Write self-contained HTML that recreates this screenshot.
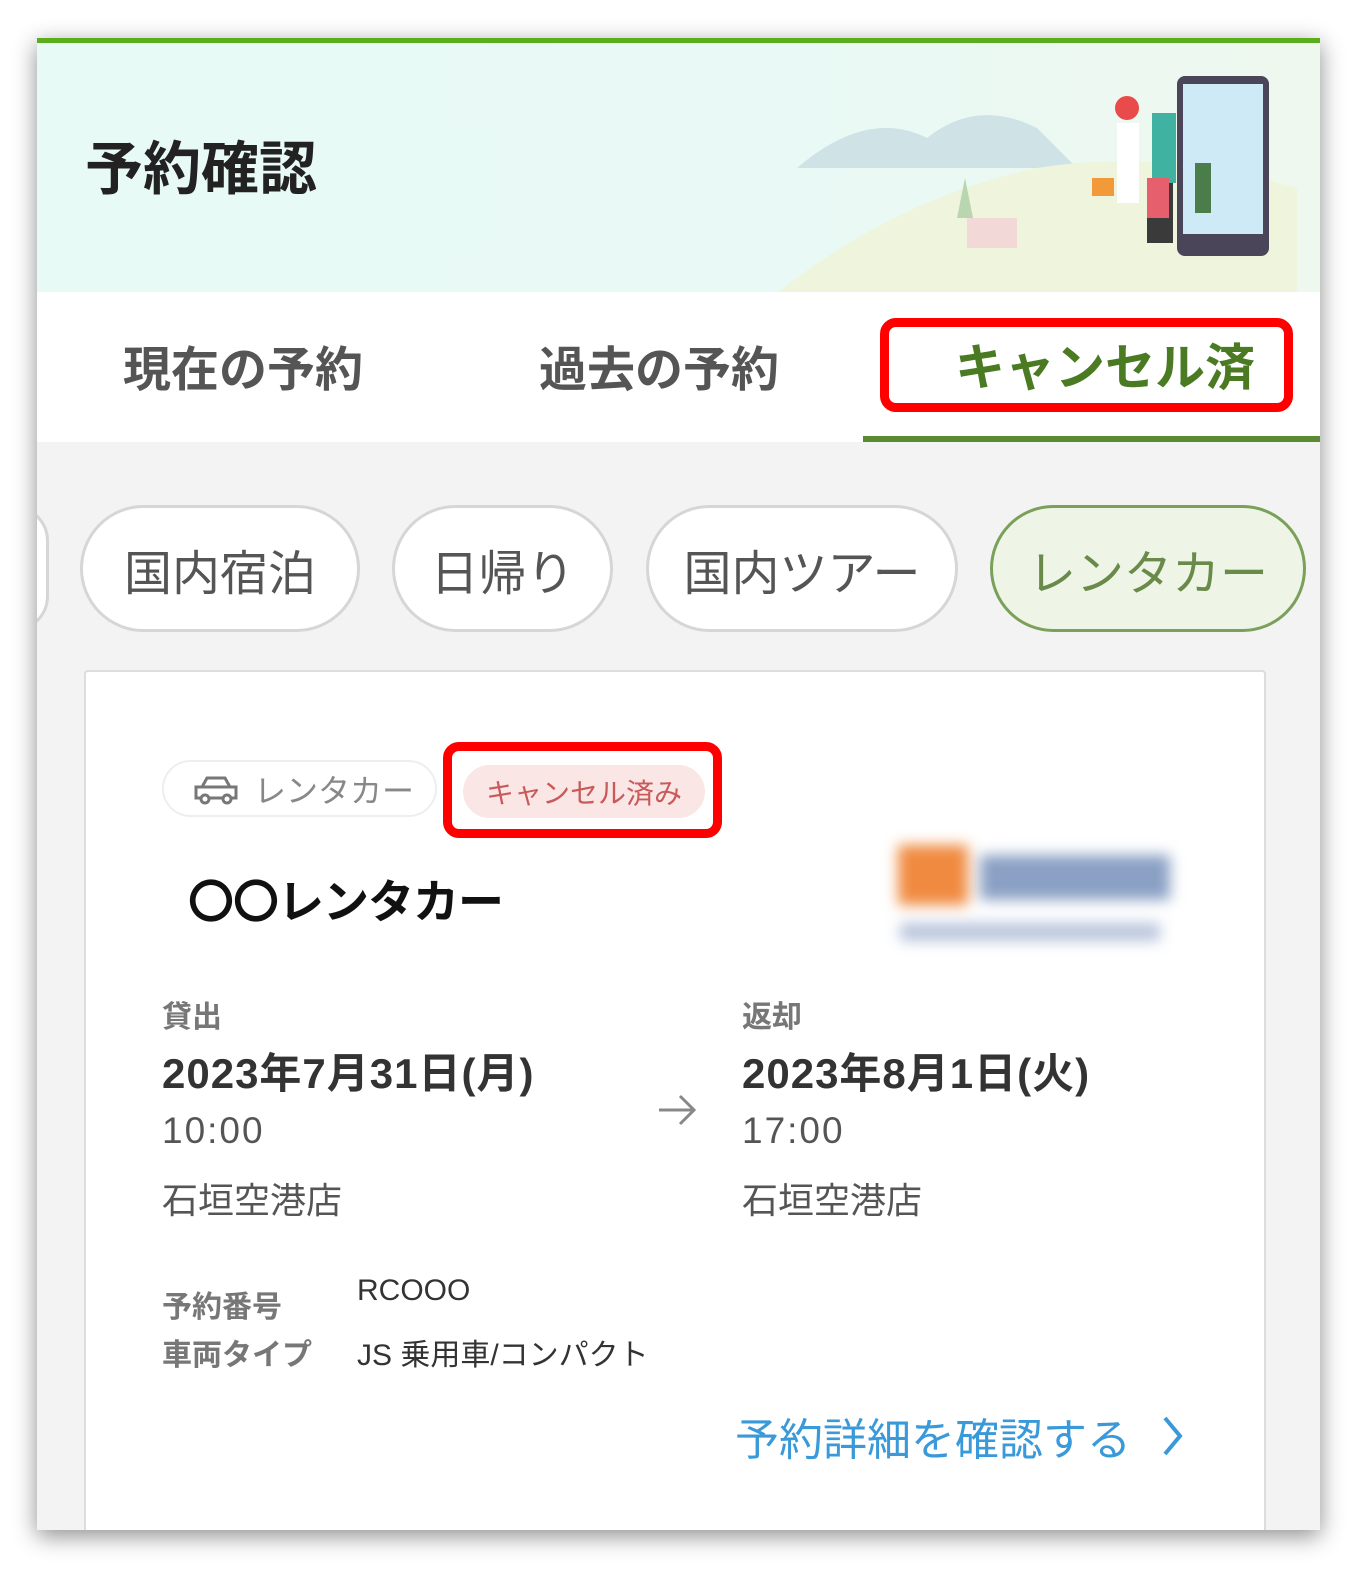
<!DOCTYPE html>
<html><head><meta charset="utf-8"><style>
*{box-sizing:border-box;margin:0;padding:0}
body{width:1365px;height:1578px;background:#fff;position:relative;overflow:hidden;font-family:"Liberation Sans","Noto Sans CJK JP",sans-serif}
.abs{position:absolute}
#frame{left:37px;top:38px;width:1283px;height:1492px;background:#f3f3f3;box-shadow:0 6px 22px rgba(0,0,0,.45);overflow:hidden}
.chip{position:absolute;top:467px;height:127px;border:3px solid #d6d6d6;border-radius:64px;background:#fff;font-size:48px;color:#555;display:flex;align-items:center;justify-content:center;white-space:nowrap}
.red{position:absolute;border:9px solid #f00;border-radius:16px}
</style></head><body>
<div id="frame" class="abs">
  <div class="abs" style="left:0;top:0;width:1283px;height:5px;background:#5aae1e"></div>
  <div class="abs" style="left:0;top:5px;width:1283px;height:249px;background:linear-gradient(90deg,#e8faf6 0%,#e9f9f5 60%,#eef8ee 100%)"></div>
  <svg class="abs" style="left:740px;top:30px" width="520" height="225" viewBox="0 0 520 225">
    <path d="M20 100 Q90 40 150 70 Q200 30 260 60 L300 100 Z" fill="#cfe3e6"/>
    <path d="M0 225 Q120 130 260 100 Q380 80 520 120 L520 225 Z" fill="#eef5dc"/>
    <path d="M180 150 l8 -40 l8 40 z" fill="#b9d6b0"/>
    <rect x="190" y="150" width="50" height="30" fill="#f3d8d8"/>
    <rect x="400" y="8" width="92" height="180" rx="8" fill="#4a4558"/>
    <rect x="406" y="16" width="80" height="150" fill="#cdeaf6"/>
    <circle cx="350" cy="40" r="12" fill="#e94a4a"/>
    <rect x="340" y="55" width="22" height="80" fill="#fff"/>
    <rect x="375" y="45" width="24" height="70" fill="#3fb2a2"/>
    <rect x="370" y="115" width="26" height="60" fill="#3a3a3a"/>
    <rect x="370" y="110" width="22" height="40" fill="#e55f6d"/>
    <rect x="315" y="110" width="22" height="18" fill="#f29a3a"/>
    <rect x="418" y="95" width="16" height="50" fill="#4a7d4a"/>
  </svg>
  <div class="abs" style="left:48px;top:84px;font-size:58px;font-weight:bold;color:#222">予約確認</div>
  <div class="abs" style="left:0;top:254px;width:1283px;height:150px;background:#fff"></div>
  <div class="abs" style="left:86px;top:292px;font-size:48px;color:#555;font-weight:bold">現在の予約</div>
  <div class="abs" style="left:502px;top:292px;font-size:48px;color:#555;font-weight:bold">過去の予約</div>
  <div class="abs" style="left:918px;top:290px;font-size:50px;color:#4a7a22;font-weight:bold">キャンセル済</div>
  <div class="abs" style="left:826px;top:398px;width:457px;height:6px;background:#5a8a32"></div>
  <div class="chip" style="left:-60px;width:72px"></div>
  <div class="chip" style="left:43px;width:280px">国内宿泊</div>
  <div class="chip" style="left:355px;width:221px">日帰り</div>
  <div class="chip" style="left:609px;width:312px">国内ツアー</div>
  <div class="chip" style="left:953px;width:316px;border-color:#7aa05a;background:#eef4e6;color:#6a8a4a">レンタカー</div>
  <div class="abs" style="left:47px;top:632px;width:1182px;height:900px;background:#fff;border:2px solid #ddd;border-radius:4px"></div>
</div>
<div class="red" style="left:880px;top:318px;width:413px;height:94px"></div>
<div class="abs" style="left:162px;top:760px;width:275px;height:57px;border:2px solid #eee;border-radius:29px;display:flex;align-items:center;padding-left:28px;font-size:32px;color:#888">
<svg width="48" height="32" viewBox="0 0 48 32" style="margin-right:14px"><path d="M10 14 L15 5 H33 L38 14 M4 14 H44 V25 H4 Z" fill="none" stroke="#777" stroke-width="3"/><circle cx="13" cy="26" r="4" fill="#fff" stroke="#777" stroke-width="3"/><circle cx="35" cy="26" r="4" fill="#fff" stroke="#777" stroke-width="3"/></svg>レンタカー</div>
<div class="abs" style="left:463px;top:765px;width:242px;height:53px;background:#fbe6e6;border-radius:27px;font-size:28px;color:#c85a5a;display:flex;align-items:center;justify-content:center">キャンセル済み</div>
<div class="red" style="left:443px;top:742px;width:279px;height:96px"></div>
<div class="abs" style="left:188px;top:866px;font-size:46px;font-weight:bold;color:#111;letter-spacing:-1px">〇〇レンタカー</div>
<div class="abs" style="left:890px;top:835px;width:295px;height:118px;filter:blur(7px)">
  <div class="abs" style="left:8px;top:10px;width:70px;height:60px;background:#f08a40"></div>
  <div class="abs" style="left:90px;top:20px;width:190px;height:45px;background:#8aa0c4"></div>
  <div class="abs" style="left:10px;top:88px;width:260px;height:18px;background:#b8c4dc"></div>
</div>
<div class="abs" style="left:162px;top:992px;font-size:30px;font-weight:bold;color:#777">貸出</div>
<div class="abs" style="left:162px;top:1040px;font-size:42px;font-weight:bold;color:#333;letter-spacing:1px">2023年7月31日(月)</div>
<div class="abs" style="left:162px;top:1110px;font-size:37px;color:#555;letter-spacing:2px">10:00</div>
<div class="abs" style="left:162px;top:1172px;font-size:36px;color:#555">石垣空港店</div>
<div class="abs" style="left:742px;top:992px;font-size:30px;font-weight:bold;color:#777">返却</div>
<div class="abs" style="left:742px;top:1040px;font-size:42px;font-weight:bold;color:#333;letter-spacing:1px">2023年8月1日(火)</div>
<div class="abs" style="left:742px;top:1110px;font-size:37px;color:#555;letter-spacing:2px">17:00</div>
<div class="abs" style="left:742px;top:1172px;font-size:36px;color:#555">石垣空港店</div>
<svg class="abs" style="left:656px;top:1092px" width="42" height="36" viewBox="0 0 42 36"><path d="M3 18 H38 M24 4 L38 18 L24 32" fill="none" stroke="#888" stroke-width="3"/></svg>
<div class="abs" style="left:162px;top:1282px;font-size:30px;color:#777;font-weight:bold">予約番号</div>
<div class="abs" style="left:357px;top:1274px;font-size:30px;color:#333">RCOOO</div>
<div class="abs" style="left:162px;top:1330px;font-size:30px;color:#777;font-weight:bold">車両タイプ</div>
<div class="abs" style="left:357px;top:1330px;font-size:30px;color:#333">JS 乗用車/コンパクト</div>
<div class="abs" style="left:735px;top:1404px;font-size:44px;color:#3a9ad9">予約詳細を確認する</div>
<svg class="abs" style="left:1160px;top:1414px" width="26" height="44" viewBox="0 0 26 44"><path d="M5 4 L20 22 L5 40" fill="none" stroke="#3a9ad9" stroke-width="4"/></svg>
</body></html>
